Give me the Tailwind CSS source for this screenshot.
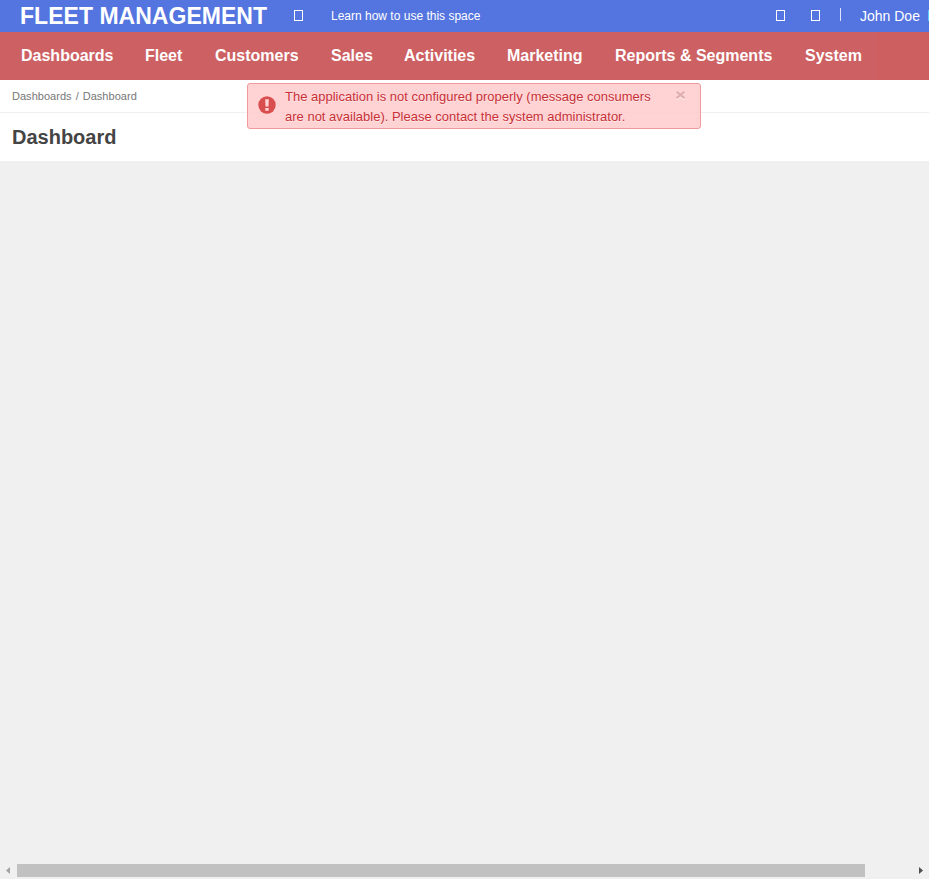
<!DOCTYPE html>
<html lang="en">
<head>
<meta charset="utf-8">
<title>Dashboard</title>
<script src="https://cdn.jsdelivr.net/npm/@tailwindcss/browser@4"></script>
</head>
<body class="h-[879px] w-[929px] overflow-hidden bg-[#f0f0f0] font-['Liberation_Sans',Arial,sans-serif]">
<div class="relative flex h-[879px] w-[929px] flex-col overflow-hidden whitespace-nowrap">
  <header class="flex h-8 shrink-0 items-center bg-[#5474df] text-white">
    <h1 class="ml-5 w-[274px] text-[23px] leading-8 font-bold tracking-[0.03px]">FLEET MANAGEMENT</h1>
    <span class="mb-px h-[11px] w-[9px] border border-white"></span>
    <a class="ml-[28px] text-[12px] leading-8">Learn how to use this space</a>
    <div class="ml-auto flex h-8 w-[153px] shrink-0 items-center">
      <span class="mb-px h-[11px] w-[9px] border border-white"></span>
      <span class="mb-px ml-[26px] h-[11px] w-[9px] border border-white"></span>
      <span class="mb-[3px] ml-[20px] h-[13px] w-px bg-white/80"></span>
      <span class="ml-[19px] w-[68px] text-[14px] leading-8">John Doe</span>
      <span class="mb-px h-[11px] w-px bg-[#5bc8fa]"></span>
    </div>
  </header>
  <nav class="flex h-12 shrink-0 bg-[#cd6062] pl-[21px] text-[16px] leading-[47px] font-bold text-white">
    <a class="w-[124px]">Dashboards</a>
    <a class="w-[70px]">Fleet</a>
    <a class="w-[116px]">Customers</a>
    <a class="w-[73px]">Sales</a>
    <a class="w-[103px]">Activities</a>
    <a class="w-[108px]">Marketing</a>
    <a class="w-[190px]">Reports &amp; Segments</a>
    <a class="w-[71px]">System</a>
    <span class="flex-1 bg-[#cd5f60]"></span>
  </nav>
  <div class="flex h-[33px] shrink-0 items-center gap-1 border-b border-[#f0f0f0] bg-white pl-3 text-[11px] tracking-[0.03px] text-[#777]">
    <a>Dashboards</a><span>/</span><span>Dashboard</span>
  </div>
  <div class="h-12 shrink-0 bg-white pl-3">
    <h2 class="text-[20px] leading-[48px] font-bold text-[#444]">Dashboard</h2>
  </div>
  <main class="flex-1"></main>
  <div class="flex h-[17px] shrink-0 items-center bg-[#f0f0f0]">
    <svg class="w-[17px]" width="17" height="17" viewBox="0 0 17 17"><path d="M6 8.5 10 5v7z" fill="#a3a3a3"/></svg>
    <div class="h-[13px] w-[848px] bg-[#c1c1c1]"></div>
    <svg class="ml-auto" width="17" height="17" viewBox="0 0 17 17"><path d="M7 5v7l4-3.500z" fill="#505050"/></svg>
  </div>

  <div class="absolute top-[83px] left-[247px] flex h-[46px] w-[454px] rounded-[3px] border border-[#f09a9c] bg-[#ffcbcc]/85 text-[#c83036]">
    <svg class="mt-[12px] ml-[10px]" width="18" height="18" viewBox="0 0 18 18"><circle cx="9" cy="9" r="8.700" fill="#d94f50"/><path d="M7.200 3.300h3.600L10.500 10.500h-3zM7.300 12h3.400v2.700H7.300z" fill="#ffd6d6"/></svg>
    <p class="mt-[3px] ml-[9px] w-[390px] text-[13px] leading-5 [text-shadow:0_1px_0_rgba(255,255,255,0.5)]">The application is not configured properly (message consumers<br>are not available). Please contact the system administrator.</p>
    <svg class="mt-[7px]" width="12" height="9" viewBox="0 0 12 9"><path d="M1.500 1.800 9.500 8.500M9.500 1.800 1.500 8.500" stroke="#fff" stroke-opacity=".6" stroke-width="2"/><path d="M1.500 .8 9.500 7.200M9.500 .8 1.500 7.200" stroke="#e0aeb0" stroke-width="2.200"/></svg>
  </div>
</div>
</body>
</html>
